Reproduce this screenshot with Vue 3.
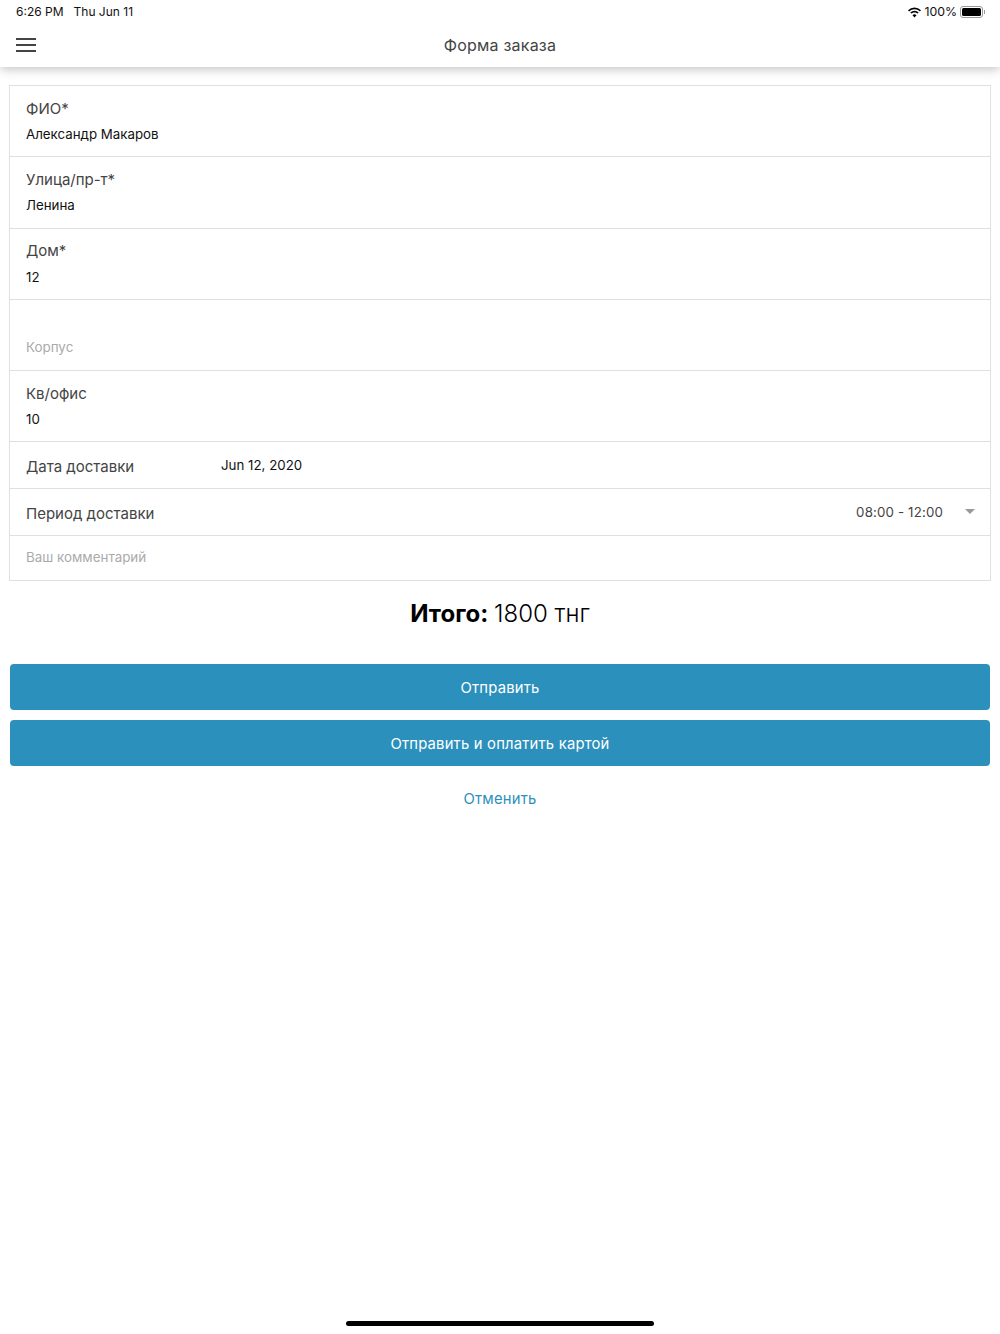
<template>
    <div class="screen">
        <header class="topbar">
            <div class="status">
                <span class="clock">6:26 PM</span>
                <span class="date">Thu Jun 11</span>
                <span class="status-right">
                    <svg class="wifi" width="15" height="11" viewBox="0 0 15 11">
                        <path d="M7.5 2.200c2.100 0 4 .8 5.400 2.200l1.100-1.200A9.300 9.300 0 0 0 7.500.5 9.300 9.300 0 0 0 1 3.200l1.100 1.200a7.700 7.700 0 0 1 5.400-2.200z" fill="#000"/>
                        <path d="M7.500 5.400c1.200 0 2.300.5 3.100 1.200l1.100-1.200a6.100 6.100 0 0 0-8.400 0l1.100 1.200c.8-.7 1.900-1.200 3.100-1.200z" fill="#000"/>
                        <path d="M7.500 10.500l2-2.200a2.900 2.900 0 0 0-4 0z" fill="#000"/>
                    </svg>
                    <span class="percent">100%</span>
                    <span class="battery"><span class="battery-fill"></span></span>
                    <span class="battery-tip"></span>
                </span>
            </div>
            <div class="navbar">
                <button class="burger" aria-label="menu">
                    <span></span><span></span><span></span>
                </button>
                <h1 class="title">Форма заказа</h1>
            </div>
        </header>

        <main class="content">
            <section class="form">
                <div v-for="field in stackedFields" :key="field.label" class="row stacked">
                    <template v-if="field.value">
                        <label class="field-label">{{ field.label }}</label>
                        <div class="field-value">{{ field.value }}</div>
                    </template>
                    <div v-else class="placeholder stacked-placeholder">{{ field.label }}</div>
                </div>

                <div class="row inline">
                    <label class="field-label date-label">Дата доставки</label>
                    <div class="field-value">Jun 12, 2020</div>
                </div>

                <div class="row inline period">
                    <label class="field-label">Период доставки</label>
                    <div class="select">
                        <span class="select-value">08:00 - 12:00</span>
                        <span class="caret"></span>
                    </div>
                </div>

                <div class="row comment">
                    <div class="placeholder">Ваш комментарий</div>
                </div>
            </section>

            <div class="total"><b>Итого:</b> 1800 тнг</div>

            <div class="actions">
                <button class="btn">Отправить</button>
                <button class="btn">Отправить и оплатить картой</button>
                <button class="btn-clear">Отменить</button>
            </div>
        </main>

        <div class="home-indicator"></div>
    </div>
</template>

<script setup>
const stackedFields = [
    { label: 'ФИО*', value: 'Александр Макаров' },
    { label: 'Улица/пр-т*', value: 'Ленина' },
    { label: 'Дом*', value: '12' },
    { label: 'Корпус', value: '' },
    { label: 'Кв/офис', value: '10' }
];
</script>

<style>
html, body {
    margin: 0;
    background: #fff;
}
</style>

<style scoped>
.screen {
    position: relative;
    height: 1334px;
    overflow: hidden;
    background: #fff;
    font-family: Inter, "Noto Sans", sans-serif;
    color: #000;
}

.topbar {
    height: 67px;
    background: #fff;
    box-shadow: 0 2px 10px rgba(0, 0, 0, 0.25);
}

.status {
    display: flex;
    align-items: center;
    height: 24px;
    padding: 0 15px 0 16px;
    font-size: 12px;
    line-height: 24px;
    color: #111;
}

.date {
    margin-left: 10px;
}

.status-right {
    display: flex;
    align-items: center;
    margin-left: auto;
}

.wifi {
    margin-right: 2px;
}

.percent {
    font-size: 12.3px;
}

.battery {
    box-sizing: border-box;
    width: 23px;
    height: 12px;
    margin-left: 3px;
    padding: 1px;
    border: 1px solid #999;
    border-radius: 3px;
}

.battery-fill {
    display: block;
    height: 100%;
    background: #000;
    border-radius: 1.5px;
}

.battery-tip {
    width: 1px;
    height: 4px;
    margin-left: 1px;
    background: #999;
}

.navbar {
    display: flex;
    align-items: center;
    justify-content: center;
    position: relative;
    height: 41px;
    padding-bottom: 2px;
}

.burger {
    position: absolute;
    left: 16px;
    top: 14px;
    display: flex;
    flex-direction: column;
    gap: 4px;
    width: 20px;
    padding: 0;
    border: 0;
    background: none;
}

.burger span {
    height: 2px;
    background: #444;
}

.title {
    margin: 0;
    font-size: 16px;
    font-weight: 400;
    letter-spacing: 0.2px;
    color: #444;
}

.content {
    padding: 18px 10px 0;
}

.form {
    margin: 0 -1px;
    border: 1px solid #e0e0e0;
}

.row {
    box-sizing: border-box;
    border-bottom: 1px solid #e0e0e0;
}

.row:last-child {
    border-bottom: 0;
}

.stacked {
    height: 71.3px;
    padding: 0 16px;
}

.stacked .field-label {
    display: block;
    padding-top: 12.5px;
    line-height: 20px;
}

.stacked .field-value {
    margin-top: 5.5px;
    line-height: 20px;
}

.field-label {
    font-size: 15px;
    color: #444;
}

.field-value {
    font-size: 13.3px;
    color: #111;
}

.stacked-placeholder {
    padding-top: 37px;
}

.placeholder {
    font-size: 13.4px;
    line-height: 20px;
    color: #aaa;
}

.inline {
    display: flex;
    align-items: center;
    height: 47px;
    padding: 0 16px;
}

.date-label {
    width: 195px;
    padding-top: 2px;
}

.period {
    justify-content: space-between;
}

.period .field-label {
    padding-top: 2px;
}

.select {
    display: flex;
    align-items: center;
}

.select-value {
    font-size: 13.3px;
    letter-spacing: 0.15px;
    color: #444;
}

.caret {
    width: 0;
    height: 0;
    margin: -2px -1px 0 22px;
    border-top: 5px solid #999;
    border-left: 5px solid transparent;
    border-right: 5px solid transparent;
}

.comment {
    height: 44px;
    padding: 11px 16px 0;
}

.total {
    margin-top: 18px;
    text-align: center;
    font-size: 24px;
    line-height: 30px;
    font-weight: 300;
}

.total b {
    margin-right: -1px;
    font-weight: 700;
}

.actions {
    display: flex;
    flex-direction: column;
    gap: 10px;
    margin-top: 35px;
}

.btn {
    height: 46px;
    padding: 1px 0 0;
    border: 0;
    border-radius: 4px;
    background: #2b90bc;
    color: #fff;
    font-family: inherit;
    font-size: 14.8px;
    letter-spacing: 0.2px;
}

.btn-clear {
    height: 46px;
    padding: 0;
    border: 0;
    background: none;
    color: #2b90bc;
    font-family: inherit;
    font-size: 14.8px;
    letter-spacing: 0.2px;
}

.home-indicator {
    position: absolute;
    left: 346px;
    bottom: 8px;
    width: 308px;
    height: 5px;
    border-radius: 3px;
    background: #000;
}
</style>
